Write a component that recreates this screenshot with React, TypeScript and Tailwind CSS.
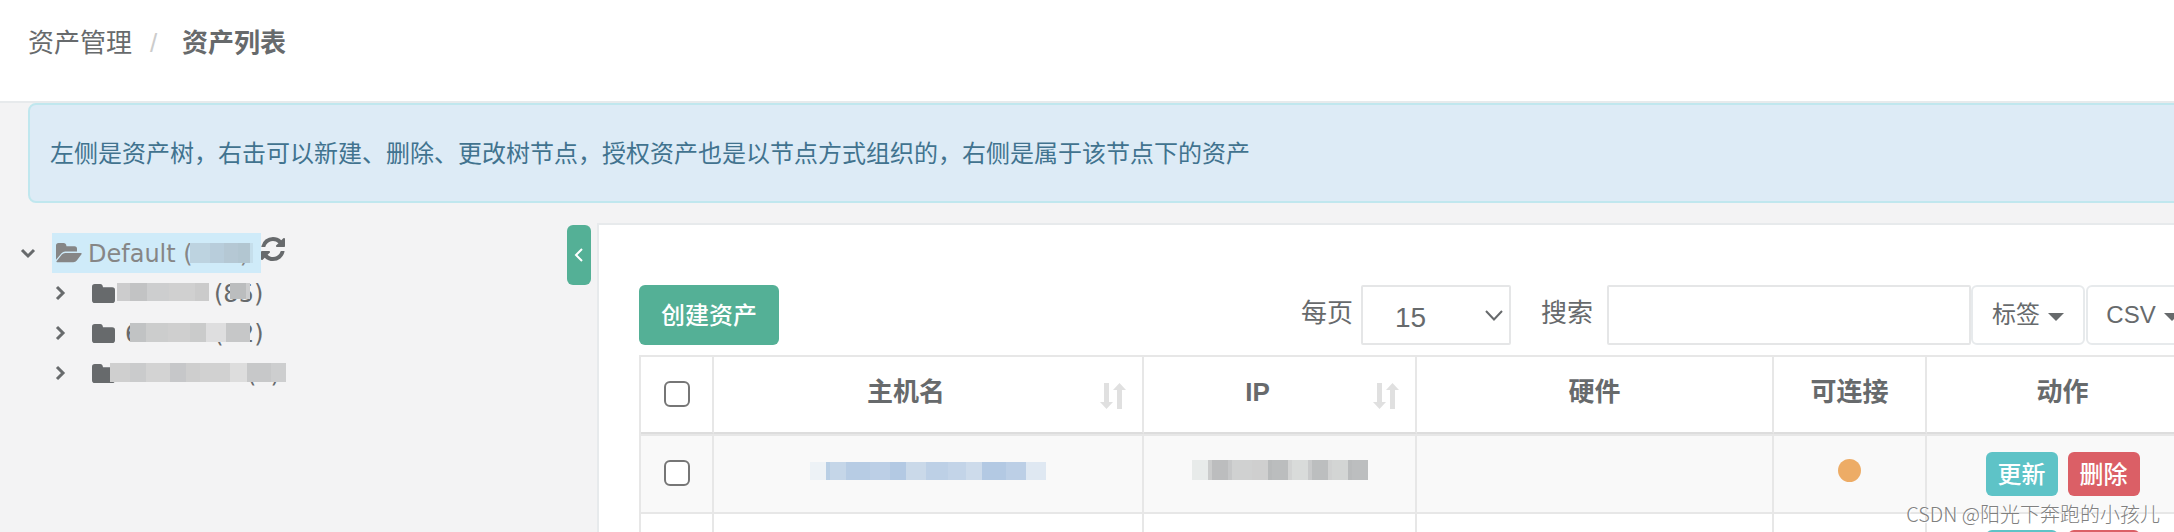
import type { ReactNode } from 'react'
import clsx from 'clsx'

type Block = [width: number, color: string]

// Pixelated strip that hides a sensitive value
function Mosaic({ blocks, className }: { blocks: Block[]; className?: string }) {
  return (
    <span aria-hidden="true" className={clsx('flex', className)}>
      {blocks.map(([width, color], i) => (
        <span key={i} className="h-full shrink-0" style={{ width, backgroundColor: color }} />
      ))}
    </span>
  )
}

function FolderOpenIcon() {
  return (
    <svg viewBox="0 0 26 20" className="h-5 w-[26px] shrink-0" fill="currentColor" aria-hidden="true">
      <path d="M2.500 0h5q2.500 0 3 3.300h8q2.500 0 2.500 2.500V8.600H9.200q-2.200 0-3.700 1.700L0 16.800V2.500Q0 0 2.500 0z" />
      <path d="M9.200 10h15.600q1.400.1.700 1.300l-4.700 6.200q-1.300 1.700-3.500 1.700H1.100q-1.200-.1-.4-1.300l5.200-6.300Q7.200 10 9.200 10z" />
    </svg>
  )
}

function FolderIcon() {
  return (
    <svg viewBox="0 0 23 19" className="h-[19px] w-[23px] shrink-0" fill="currentColor" aria-hidden="true">
      <path d="M2.800 0h5.400q2.300 0 2.800 3.200h9.200q2.800 0 2.800 2.800v10.200q0 2.800-2.800 2.800H2.800Q0 19 0 16.200V2.800Q0 0 2.800 0z" />
    </svg>
  )
}

function RefreshIcon() {
  return (
    <svg viewBox="0 128 1536 1536" className="size-6" fill="currentColor" aria-hidden="true">
      <path d="M1511 1056q0 5-1 7-64 268-268 434.500t-478 166.500q-146 0-282.500-55t-243.500-157l-129 129q-19 19-45 19t-45-19-19-45v-448q0-26 19-45t45-19h448q26 0 45 19t19 45-19 45l-137 137q71 66 161 102t187 36q134 0 250-65t186-179q11-17 53-117 8-23 30-23h192q13 0 22.500 9.500t9.500 22.500zm25-800v448q0 26-19 45t-45 19h-448q-26 0-45-19t-19-45 19-45l138-138q-148-137-349-137-134 0-250 65t-186 179q-11 17-53 117-8 23-30 23h-199q-13 0-22.500-9.500t-9.500-22.500v-7q65-268 270-434.500t480-166.500q146 0 284 55.500t245 156.500l130-129q19-19 45-19t45 19 19 45z" />
    </svg>
  )
}

function SortIcon() {
  return (
    <svg viewBox="0 0 26 28" className="h-7 w-[26px]" fill="#e0e0e0" aria-hidden="true">
      <path d="M4 1h5v19h4L6.500 27 0 20h4zM17 27h5V8h4l-6.500-7L13 8h4z" />
    </svg>
  )
}

function Chevron({ d, box, className }: { d: string; box: string; className: string }) {
  return (
    <svg viewBox={box} className={clsx('overflow-visible', className)} fill="none" stroke="currentColor" aria-hidden="true">
      <path d={d} />
    </svg>
  )
}

function Caret() {
  return (
    <svg viewBox="0 0 16 8" className="mt-1 h-2 w-4 shrink-0" fill="currentColor" aria-hidden="true">
      <path d="M0 0h16L8 8z" />
    </svg>
  )
}

function TreeRow({ label, children }: { label: string; children: ReactNode }) {
  return (
    <li className="flex h-10 items-center pl-14">
      <button type="button" aria-label={label} className="mr-7">
        <Chevron box="0 0 8 14" d="M1 1l6 6-6 6" className="h-3.5 w-2 stroke-3" />
      </button>
      <FolderIcon />
      <span className="relative flex h-10 flex-1 items-center pt-0.5">{children}</span>
    </li>
  )
}

function AssetTree() {
  return (
    <nav aria-label="资产树" className="w-[567px] shrink-0 pt-[30px] font-['DejaVu_Sans','Noto_Sans_CJK_SC',sans-serif] text-2xl">
      <div className="flex h-10 items-center pl-[21px]">
        <button type="button" aria-label="收起" className="mr-[17px]">
          <Chevron box="0 0 14 8" d="M1 1l6 6 6-6" className="h-2 w-3.5 stroke-3" />
        </button>
        <a href="#" className="relative flex h-10 w-[209px] items-center bg-[#cfebf9] pl-1 text-[#868686]">
          <FolderOpenIcon />
          <span className="ml-1.5 flex-1 whitespace-nowrap pt-0.5">Default (</span>
          <span className="mr-3 pt-0.5">)</span>
          <Mosaic
            className="absolute top-2.5 left-[138px] h-5"
            blocks={[[20, '#bdd3e0'], [14, '#b8cddb'], [14, '#b5c8d4'], [12, '#b2c6d1'], [3, '#c5deeb']]}
          />
        </a>
        <button type="button" aria-label="刷新" className="mb-2">
          <RefreshIcon />
        </button>
      </div>
      <ul>
        <TreeRow label="展开节点 1">
          <span className="ml-[99px]">(85)</span>
          <Mosaic
            className="absolute top-2.5 left-0.5 h-[18px]"
            blocks={[[13, '#cccccd'], [17, '#c2c3c4'], [22, '#cdcecf'], [26, '#d0d0d0'], [14, '#cbcbcb']]}
          />
          <Mosaic className="absolute top-2.5 left-[115px] h-4" blocks={[[16, '#bbbdbe'], [4, '#cccdce']]} />
        </TreeRow>
        <TreeRow label="展开节点 2">
          <span className="ml-2.5">6</span>
          <span className="ml-[74px]">(12)</span>
          <Mosaic
            className="absolute top-2.5 left-[15px] h-[19px]"
            blocks={[[16, '#c1c3c4'], [22, '#cccdcd'], [22, '#cfcfcf'], [16, '#cacbcb'], [20, '#dededf'], [24, '#c6c7c8']]}
          />
        </TreeRow>
        <TreeRow label="展开节点 3">
          <span className="ml-[132px]">(</span>
          <span className="ml-3.5">)</span>
          <Mosaic
            className="absolute top-2.5 -left-[5px] h-[19px]"
            blocks={[
              [20, '#cfcfcf'], [16, '#cacbcc'], [24, '#d3d3d3'], [16, '#c6c7c9'], [14, '#cecece'],
              [30, '#d1d1d1'], [17, '#dddddd'], [24, '#c7c8c9'], [15, '#cdcecf'],
            ]}
          />
        </TreeRow>
      </ul>
    </nav>
  )
}

const dropdown = 'flex h-[60px] w-[114px] shrink-0 items-center justify-center gap-2 rounded-md border-2 border-[#e7eaec] bg-white text-2xl whitespace-nowrap'

function Toolbar() {
  return (
    <div className="flex items-center text-[26px]">
      <button type="button" className="mr-auto h-[60px] w-[140px] rounded-md bg-[#54b096] pt-0.5 text-2xl font-medium text-white">
        创建资产
      </button>
      <label htmlFor="page-size" className="mr-2 mb-1">每页</label>
      <div className="relative mr-[30px] w-[150px]">
        <select
          id="page-size"
          defaultValue="15"
          className="h-[60px] w-full appearance-none rounded-xs border-2 border-[#e5e6e7] bg-white pt-1.5 pl-8 text-[28px]"
        >
          <option>15</option>
          <option>25</option>
          <option>50</option>
        </select>
        <Chevron
          box="0 0 18 11"
          d="M1 1l8 8.500 8-8.500"
          className="pointer-events-none absolute top-[25px] right-2 h-[11px] w-[18px] stroke-2"
        />
      </div>
      <label htmlFor="search" className="mr-3.5 mb-1">搜索</label>
      <input id="search" type="text" className="h-[60px] w-[364px] rounded-xs border-2 border-[#e5e6e7] bg-white px-4" />
      <button type="button" className={clsx(dropdown, 'mr-px')}>
        标签 <Caret />
      </button>
      <button type="button" className={dropdown}>
        CSV <Caret />
      </button>
    </div>
  )
}

function CheckBox({ label }: { label: string }) {
  return (
    <input
      type="checkbox"
      aria-label={label}
      className="mx-auto mb-0.5 block size-[26px] appearance-none rounded-md border-2 border-[#767676] bg-white"
    />
  )
}

const hostBlocks: Block[] = [
  [16, '#edf2f6'], [4, '#b9cfe5'], [16, '#c5d6e8'], [24, '#b7cce4'], [20, '#bccfe6'], [16, '#b3c9e3'],
  [20, '#cad9e9'], [22, '#bdd0e6'], [18, '#c3d4e8'], [16, '#cddbeb'], [24, '#b3c9e3'], [20, '#bccfe6'], [20, '#dfe8f2'],
]

const ipBlocks: Block[] = [
  [16, '#e8ebea'], [4, '#cbcccc'], [16, '#bcbdbe'], [4, '#c6c7c8'], [20, '#d0d1d1'], [16, '#cfcfcf'], [4, '#b8babb'],
  [16, '#bbbdbe'], [4, '#d2d3d3'], [16, '#d9dbda'], [4, '#c9cacb'], [16, '#bcbebf'], [4, '#d0d1d1'], [16, '#d3d5d4'],
  [4, '#b9bbbc'], [16, '#bcbebf'],
]

function AssetRow({ index }: { index: number }) {
  const first = index === 0
  const cell = clsx('border-r-2 border-b-2 border-[#e7e7e7] p-0', first ? 'h-20 border-t-2 bg-[#f9f9f9]' : 'h-[78px]')
  return (
    <tr>
      <td className={cell}>
        <CheckBox label={`选择资产 ${index + 1}`} />
      </td>
      <td className={cell}>{first && <Mosaic blocks={hostBlocks} className="mb-1.5 h-[18px] justify-center" />}</td>
      <td className={cell}>{first && <Mosaic blocks={ipBlocks} className="mb-2 h-5 justify-center" />}</td>
      <td className={cell}></td>
      <td className={cell}>
        <span className="mx-auto mb-2 block size-[23px] rounded-full bg-[#edac66]" />
      </td>
      <td className={cell}>
        <div className="flex justify-center gap-2.5 text-2xl font-medium text-white">
          <button type="button" className="h-11 w-[72px] rounded-md bg-[#5ec3c7] pt-0.5">更新</button>
          <button type="button" className="h-11 w-[72px] rounded-md bg-[#db5f66] pt-0.5">删除</button>
        </div>
      </td>
    </tr>
  )
}

const headCell = 'relative h-[77px] border-r-2 border-b-2 border-r-[#e7e7e7] border-b-[#dddddd] p-0 pb-1'

function AssetTable() {
  return (
    <table className="mt-2.5 w-full table-fixed border-separate border-spacing-0 border-t-2 border-l-2 border-[#e7e7e7] text-[26px]">
      <colgroup>
        <col className="w-[73px]" />
        <col className="w-[430px]" />
        <col className="w-[273px]" />
        <col />
        <col className="w-[153px]" />
        <col className="w-[273px]" />
      </colgroup>
      <thead>
        <tr>
          <th className="h-[77px] border-r-2 border-b-2 border-r-[#e7e7e7] border-b-[#dddddd] p-0">
            <CheckBox label="全选" />
          </th>
          <th className={clsx(headCell, 'pr-[60px] pl-4')}>
            主机名
            <span className="absolute right-4 bottom-[22px]"><SortIcon /></span>
          </th>
          <th className={clsx(headCell, 'pr-[60px] pl-4')}>
            IP
            <span className="absolute right-4 bottom-[22px]"><SortIcon /></span>
          </th>
          <th className={headCell}>硬件</th>
          <th className={headCell}>可连接</th>
          <th className={headCell}>动作</th>
        </tr>
      </thead>
      <tbody>
        <AssetRow index={0} />
        <AssetRow index={1} />
      </tbody>
    </table>
  )
}

export default function App() {
  return (
    <div className="relative flex h-screen flex-col overflow-hidden bg-[#f3f3f4] font-['Liberation_Sans','Noto_Sans_CJK_SC',sans-serif] text-[#676a6c]">
      <header className="border-b-2 border-[#e7eaec] bg-white px-7 pt-[25px] pb-10">
        <ol className="flex text-[26px] leading-9">
          <li><a href="#">资产管理</a></li>
          <li aria-hidden="true" className="mr-4 ml-[18px] w-4 text-[#cccccc]">/</li>
          <li className="font-bold">资产列表</li>
        </ol>
      </header>

      <div className="-mr-2 ml-7 shrink-0 rounded-lg border-2 border-[#c0e7ee] bg-[#ddebf6] px-5 pt-[31px] pb-[29px] text-2xl leading-9 text-[#41738f]">
        左侧是资产树，右击可以新建、删除、更改树节点，授权资产也是以节点方式组织的，右侧是属于该节点下的资产
      </div>

      <main className="flex min-h-0 flex-1">
        <AssetTree />
        <button
          type="button"
          aria-label="隐藏资产树"
          className="mt-[22px] mr-1.5 flex h-[60px] w-6 shrink-0 items-center justify-center rounded-md bg-[#54b096] text-white"
        >
          <Chevron box="0 0 8 14" d="M7 1L1 7l6 6" className="h-3.5 w-2 stroke-2" />
        </button>
        <section className="mt-5 min-w-0 flex-1 border-t-2 border-l-2 border-[#e7eaec] bg-white pt-[60px] pl-10">
          <div className="-mr-[26px]">
            <Toolbar />
            <AssetTable />
          </div>
        </section>
      </main>

      <p className="absolute right-3.5 bottom-1 font-['Noto_Sans_CJK_SC',sans-serif] text-xl font-light text-[#808080] [text-shadow:1px_1px_0_#ffffff]">
        CSDN @阳光下奔跑的小孩儿
      </p>
    </div>
  )
}
